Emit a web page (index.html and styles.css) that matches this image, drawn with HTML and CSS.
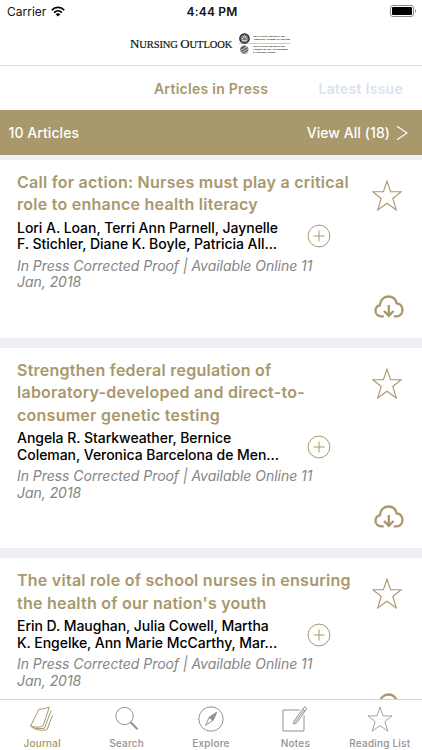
FILE: index.html
```
<!DOCTYPE html>
<html lang="en">
<head>
    <meta charset="UTF-8" />
    <meta name="viewport" content="width=device-width, initial-scale=1" />
    <title>Nursing Outlook</title>
    <link rel="stylesheet" href="styles.css">
</head>
<body>

    <!-- Shared icons -->
    <svg class="sprite" width="0" height="0">
        <symbol id="star" viewBox="0 0 30 31">
            <path d="M15 1.2 L18.6 11.8 H29.2 L20.8 18.5 L24.3 30 L15 23.3 L5.7 30 L9.2 18.5 L0.8 11.8 H11.4 Z" />
        </symbol>
        <symbol id="plus" viewBox="0 0 24 24">
            <circle cx="12" cy="12" r="10.9" />
            <path d="M12 6.5 V17.5 M6.5 12 H17.5" />
        </symbol>
        <symbol id="cloud" viewBox="0 0 30 24">
            <path d="M9.8 21.3 H7.3 C3.8 21.3 1.5 18.9 1.5 15.8 C1.5 13 3.3 10.8 5.8 10.3 C6 5.2 9.8 1.5 14.3 1.5 C18.6 1.5 21.8 4.3 22.6 8.3 C26 8.3 28.5 11.2 28.5 14.8 C28.5 18.6 26 21.3 22.6 21.3 H19.8" />
            <path d="M14.8 10 V20.6 M10 16 L14.8 20.8 L19.6 16" />
        </symbol>
    </svg>

    <header class="header">
        <div class="status-bar">
            <div class="carrier">
                <span>Carrier</span>
                <svg width="14" height="11" viewBox="0 0 14 11">
                    <path class="wave" d="M0.8 4.1 C4.2 0.5 9.8 0.5 13.2 4.1" />
                    <path class="wave" d="M3.1 6.6 C5.3 4.4 8.7 4.4 10.9 6.6" />
                    <path d="M4.7 8.2 C6 6.9 8 6.9 9.3 8.2 L7 10.6 Z" />
                </svg>
            </div>
            <span class="time">4:44 PM</span>
            <svg class="battery" width="27" height="12" viewBox="0 0 27 12">
                <rect class="shell" x="0.5" y="0.5" width="23" height="11" rx="2.5" />
                <rect x="2" y="2" width="20" height="8" rx="1" />
                <path class="tip" d="M25 4 C26.3 4.5 26.3 7.5 25 8 Z" />
            </svg>
        </div>
        <div class="brand">
            <span class="brand-name"><b>N</b>URSING <b>O</b>UTLOOK</span>
            <div class="seals">
                <div class="seal">
                    <svg width="11" height="11" viewBox="0 0 11 11">
                        <circle cx="5.5" cy="5.5" r="4.7" fill="#777" stroke="#222" stroke-width="1.2" />
                        <path d="M3 6.5 L5.5 2.5 L8 6.5 M3 7.7 H8" fill="none" stroke="#ddd" />
                    </svg>
                    <p><span>The Official Journal of the</span><span>American Academy of Nursing</span></p>
                </div>
                <div class="seal">
                    <svg width="11" height="10" viewBox="0 0 11 10">
                        <circle cx="5.3" cy="4.8" r="4.2" fill="#666" />
                        <path d="M1 6 L8 1.5 M2 8 L9.5 3.5 M4.5 9 L10 6" stroke="#ddd" stroke-width="0.8" />
                    </svg>
                    <p><span>The Official Journal of the</span><span>Council for the Advancement</span><span>of Nursing Science</span></p>
                </div>
            </div>
        </div>
    </header>

    <nav class="tabs">
        <a class="tab active">Articles in Press</a>
        <a class="tab latest">Latest Issue</a>
    </nav>

    <div class="list-bar">
        <span>10 Articles</span>
        <a class="view-all">View All (18)
            <svg width="12" height="16" viewBox="0 0 12 16"><path d="M1 1.2 L11 8 L1 14.8" /></svg>
        </a>
    </div>

    <main class="articles">
        <article class="card">
            <div class="card-text">
                <h2>Call for action: Nurses must play a critical<br>role to enhance health literacy</h2>
                <div class="author-row">
                    <p class="authors">Lori A. Loan, Terri Ann Parnell, Jaynelle<br>F. Stichler, Diane K. Boyle, Patricia All...</p>
                    <svg class="plus"><use href="#plus" /></svg>
                </div>
                <p class="meta">In Press Corrected Proof | Available Online 11<br>Jan, 2018</p>
            </div>
            <div class="card-actions">
                <svg class="star"><use href="#star" /></svg>
                <svg class="cloud"><use href="#cloud" /></svg>
            </div>
        </article>

        <article class="card">
            <div class="card-text">
                <h2>Strengthen federal regulation of<br>laboratory-developed and direct-to-<br>consumer genetic testing</h2>
                <div class="author-row">
                    <p class="authors">Angela R. Starkweather, Bernice<br>Coleman, Veronica Barcelona de Men...</p>
                    <svg class="plus"><use href="#plus" /></svg>
                </div>
                <p class="meta">In Press Corrected Proof | Available Online 11<br>Jan, 2018</p>
            </div>
            <div class="card-actions">
                <svg class="star"><use href="#star" /></svg>
                <svg class="cloud"><use href="#cloud" /></svg>
            </div>
        </article>

        <article class="card">
            <div class="card-text">
                <h2>The vital role of school nurses in ensuring<br>the health of our nation's youth</h2>
                <div class="author-row">
                    <p class="authors">Erin D. Maughan, Julia Cowell, Martha<br>K. Engelke, Ann Marie McCarthy, Mar...</p>
                    <svg class="plus"><use href="#plus" /></svg>
                </div>
                <p class="meta">In Press Corrected Proof | Available Online 11<br>Jan, 2018</p>
            </div>
            <div class="card-actions">
                <svg class="star"><use href="#star" /></svg>
                <svg class="cloud"><use href="#cloud" /></svg>
            </div>
        </article>
    </main>

    <footer class="tab-bar">
        <a class="tab-item active">
            <svg width="26" height="26" viewBox="0 0 26 26">
                <path d="M10 3.2 C13.5 3.4 17 2.2 20.3 1.2 L14.2 19.5 C10.5 22.2 5 21 1.6 20 Z" />
                <path d="M1.6 20 C4 22.5 9 23 15.5 22.2 L22 4.5 M4 21.6 C8 24.6 13 24.6 18 23.7 L23.4 9.5" />
            </svg>
            <span>Journal</span>
        </a>
        <a class="tab-item">
            <svg width="26" height="26" viewBox="0 0 26 26">
                <circle cx="10.5" cy="10" r="8.7" />
                <path d="M16.7 16.3 L23.5 23.3" stroke-width="2" />
            </svg>
            <span>Search</span>
        </a>
        <a class="tab-item">
            <svg width="26" height="26" viewBox="0 0 26 26">
                <circle cx="13" cy="13" r="12.2" />
                <path d="M18.5 6.5 L11 11.5 L7.5 19.5 L15 14.3 Z" />
                <path d="M18.5 6.5 L11 11.5 L15 14.3 Z" fill="#929292" />
            </svg>
            <span>Explore</span>
        </a>
        <a class="tab-item">
            <svg width="26" height="26" viewBox="0 0 26 26">
                <path d="M17.5 4 H1 V25 H22 V9.5" />
                <path d="M22 1.2 C23.5 0.6 25 2 24.4 3.2 L14.5 17 L11.5 18 L12 15 Z M20.8 3.2 L23 5" />
                <path d="M22 4 L13 16.3" />
            </svg>
            <span>Notes</span>
        </a>
        <a class="tab-item">
            <svg width="26" height="26"><use href="#star" /></svg>
            <span>Reading List</span>
        </a>
    </footer>

</body>
</html>
```
FILE: styles.css
```
* {
    box-sizing: border-box;
}

body {
    font-family: Inter, 'Liberation Sans', sans-serif;
    background-color: #ffffff;
    display: flex;
    flex-direction: column;
    width: 422px;
    height: 750px;
    margin: 0;
    overflow: hidden;
}

p, h2 {
    margin: 0;
    white-space: nowrap;
}

svg {
    display: block;
    flex: none;
}

.sprite {
    position: absolute;
}

/* Header */
.header {
    height: 66px;
    flex: none;
    border-bottom: 1px solid #dcdcdc;
}

.status-bar {
    height: 22px;
    display: grid;
    grid-template-columns: 1fr auto 1fr;
    align-items: center;
    padding: 0 5px 0 7px;
    font-size: 12px;
    color: #111;
}

.carrier {
    display: flex;
    align-items: center;
    gap: 5px;
}

.wave {
    fill: none;
    stroke: #000;
    stroke-width: 1.7;
}

.time {
    font-weight: 600;
    letter-spacing: 0.2px;
}

.battery {
    justify-self: end;
    margin-top: -1px;
}

.shell {
    fill: none;
    stroke: #888;
}

.tip {
    fill: #888;
}

.brand {
    height: 43px;
    display: flex;
    align-items: center;
    padding-left: 130px;
    gap: 7px;
}

.brand-name {
    font-family: 'Liberation Serif', serif;
    font-size: 10.5px;
    line-height: 14px;
    width: 102px;
    padding-top: 2px;
    white-space: nowrap;
    letter-spacing: -0.1px;
    color: #111;
    -webkit-text-stroke: 0.2px #111;
}

.brand-name b {
    font-size: 13px;
    font-weight: normal;
}

.seals {
    width: 51px;
    padding-top: 1px;
}

.seal {
    display: flex;
    align-items: center;
    height: 10px;
    gap: 3px;
}

.seal + .seal {
    border-top: 1px solid #ccc;
    height: 12px;
}

.seal p {
    font-family: 'Liberation Serif', serif;
    font-weight: bold;
    font-size: 2.8px;
    line-height: 3px;
    color: #222;
}

.seal span {
    display: block;
}

/* Tabs */
.tabs {
    height: 44px;
    flex: none;
    display: grid;
    grid-template-columns: 1fr auto 1fr;
    align-items: center;
    font-size: 14px;
    font-weight: 600;
    letter-spacing: 0.27px;
}

.tab.active {
    grid-column: 2;
    color: #a8986b;
}

.latest {
    justify-self: end;
    padding-right: 19px;
    color: #d9e2ef;
}

.list-bar {
    height: 45px;
    flex: none;
    display: flex;
    align-items: center;
    justify-content: space-between;
    padding: 0 14px 0 8.5px;
    background-color: #a8986b;
    color: #ffffff;
    font-size: 14px;
    font-weight: 500;
    letter-spacing: 0.07px;
}

.view-all {
    display: flex;
    align-items: center;
    gap: 6px;
}

.view-all path {
    fill: none;
    stroke: #ffffff;
    stroke-width: 1.2;
}

/* Articles */
.articles {
    flex: 1;
    min-height: 0;
    overflow: hidden;
    background-color: #efeff4;
    padding-top: 5px;
}

.card {
    display: flex;
    justify-content: space-between;
    background-color: #ffffff;
    padding: 11px 18px 19px 17px;
    margin-bottom: 10.3px;
}

.card-text {
    padding-bottom: 27.7px;
}

.card h2 {
    font-size: 16px;
    line-height: 22.3px;
    font-weight: 600;
    letter-spacing: 0.25px;
    color: #a8986b;
}

.author-row {
    display: flex;
    align-items: center;
    margin-top: 4px;
    width: 314px;
    justify-content: space-between;
}

.authors {
    font-size: 14px;
    line-height: 16.7px;
    font-weight: 500;
    letter-spacing: -0.04px;
    color: #000;
}

.meta {
    margin-top: 4.5px;
    font-size: 14px;
    line-height: 16.8px;
    letter-spacing: -0.04px;
    font-style: italic;
    color: #858585;
}

.plus {
    width: 24px;
    height: 24px;
    fill: none;
    stroke: #a8986b;
    stroke-width: 1;
}

.card-actions {
    display: flex;
    flex-direction: column;
    justify-content: space-between;
    align-items: center;
    padding-top: 8.5px;
    margin-right: -1.5px;
}

.star {
    width: 30px;
    height: 31px;
    margin-right: 4px;
    fill: none;
    stroke: #a8986b;
    stroke-width: 1.1;
}

.cloud {
    width: 30px;
    height: 24px;
    fill: none;
    stroke: #a8986b;
    stroke-width: 2.3;
}

/* Bottom bar */
.tab-bar {
    height: 51px;
    flex: none;
    display: grid;
    grid-template-columns: repeat(5, 1fr);
    border-top: 1px solid #d5d5d5;
    background-color: #ffffff;
    font-size: 10px;
    font-weight: 500;
    color: #929292;
}

.tab-item {
    display: flex;
    flex-direction: column;
    align-items: center;
    padding-top: 6px;
    gap: 4.5px;
    line-height: 12px;
    letter-spacing: 0.2px;
}

.tab-item.active {
    color: #a8986b;
}

.tab-item svg {
    fill: none;
    stroke: currentColor;
    stroke-width: 1;
}
```
